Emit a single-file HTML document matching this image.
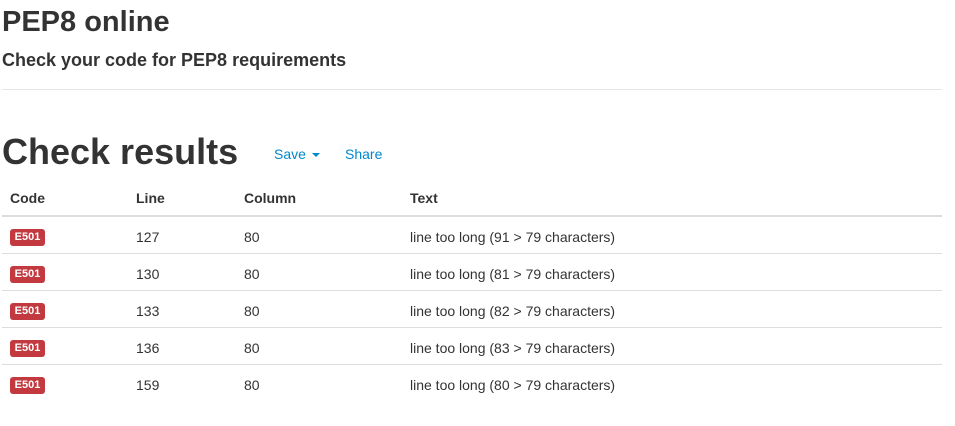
<!DOCTYPE html>
<html><head><style>
body{margin:0;background:#fff;font-family:"Liberation Sans",Arial,sans-serif;color:#333;}
.a{position:absolute;white-space:nowrap}
.row{position:absolute;left:2px;width:940px;height:1px;background:#ddd}
.b{position:absolute;left:10px;width:35px;height:17px;background:#c2393f;border-radius:3px;color:#fff;font-weight:bold;font-size:11px;line-height:17px;text-align:center}
.t{position:absolute;font-size:14px;line-height:16px}
</style></head><body>
<div class="a" style="left:2px;top:4px;font-size:29px;font-weight:bold;line-height:36px">PEP8 online</div>
<div class="a" style="left:2px;top:50px;font-size:18px;font-weight:bold;line-height:21px">Check your code for PEP8 requirements</div>
<div class="row" style="top:89px;background:#e6e6e6"></div>
<div class="a" style="left:2px;top:130px;font-size:36px;font-weight:bold;line-height:44px">Check results</div>
<div class="a" style="left:274px;top:146px;font-size:14px;color:#0088cc;line-height:16px">Save <span style="display:inline-block;width:0;height:0;border-left:4px solid transparent;border-right:4px solid transparent;border-top:4px solid #0088cc;vertical-align:middle;margin-left:2px"></span></div>
<div class="a" style="left:345px;top:146px;font-size:14px;color:#0088cc;line-height:16px">Share</div>
<div class="t" style="left:10px;top:190px;font-weight:bold">Code</div>
<div class="t" style="left:136px;top:190px;font-weight:bold">Line</div>
<div class="t" style="left:244px;top:190px;font-weight:bold">Column</div>
<div class="t" style="left:410px;top:190px;font-weight:bold">Text</div>
<div class="row" style="top:215px;height:2px"></div>

<div class="b" style="top:229px">E501</div><div class="t" style="left:136px;top:229px">127</div><div class="t" style="left:244px;top:229px">80</div><div class="t" style="left:410px;top:229px">line too long (91 &gt; 79 characters)</div>
<div class="row" style="top:253px"></div>
<div class="b" style="top:266px">E501</div><div class="t" style="left:136px;top:266px">130</div><div class="t" style="left:244px;top:266px">80</div><div class="t" style="left:410px;top:266px">line too long (81 &gt; 79 characters)</div>
<div class="row" style="top:290px"></div>
<div class="b" style="top:303px">E501</div><div class="t" style="left:136px;top:303px">133</div><div class="t" style="left:244px;top:303px">80</div><div class="t" style="left:410px;top:303px">line too long (82 &gt; 79 characters)</div>
<div class="row" style="top:327px"></div>
<div class="b" style="top:340px">E501</div><div class="t" style="left:136px;top:340px">136</div><div class="t" style="left:244px;top:340px">80</div><div class="t" style="left:410px;top:340px">line too long (83 &gt; 79 characters)</div>
<div class="row" style="top:364px"></div>
<div class="b" style="top:377px">E501</div><div class="t" style="left:136px;top:377px">159</div><div class="t" style="left:244px;top:377px">80</div><div class="t" style="left:410px;top:377px">line too long (80 &gt; 79 characters)</div>
</body></html>
